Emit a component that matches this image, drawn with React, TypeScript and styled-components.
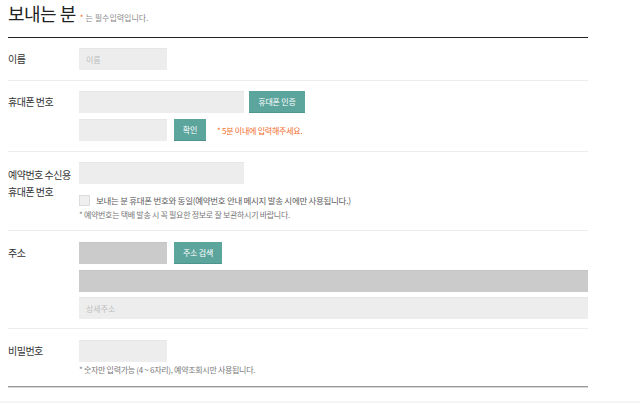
import React from "react";
import styled, { createGlobalStyle } from "styled-components";

const GlobalStyle = createGlobalStyle`
  body {
    margin: 0;
    background: #fff;
    font-family: "Noto Sans CJK KR", "Noto Sans", sans-serif;
    color: #333;
  }
`;

const Page = styled.div`
  width: 640px;
  height: 403px;
  overflow: hidden;
`;

const Section = styled.section`
  width: 580px;
  margin-left: 8px;
  border-bottom: 1px solid #999;
  box-shadow: 0 1px 0 #d6d6d6;
`;

const Header = styled.div`
  height: 38px;
  display: flex;
  align-items: baseline;
  border-bottom: 1px solid #222;
  box-sizing: border-box;
  padding-top: 0;
`;

const Title = styled.h2`
  margin: 0;
  font-size: 18px;
  line-height: 27px;
  font-weight: 400;
  letter-spacing: -0.5px;
  color: #222;
`;

const Required = styled.span`
  margin-left: 4px;
  font-size: 8px;
  letter-spacing: 0;
  color: #888;
`;

const Star = styled.span`
  color: #f26c2a;
  margin-right: 2px;
`;

const Row = styled.div<{ $pt?: number; $pb?: number; $last?: boolean }>`
  display: flex;
  padding: ${(p) => p.$pt ?? 10}px 0 ${(p) => p.$pb ?? 10}px;
  border-bottom: ${(p) => (p.$last ? "none" : "1px solid #ececec")};
`;

const Label = styled.div<{ $multi?: boolean }>`
  width: 71px;
  flex: none;
  font-size: 10px;
  letter-spacing: -0.5px;
  color: #333;
  line-height: ${(p) => (p.$multi ? "17px" : "22px")};
  padding-top: ${(p) => (p.$multi ? "4px" : "0")};
  white-space: pre-line;
`;

const Body = styled.div`
  flex: 1;
  display: flex;
  flex-direction: column;
`;

const Line = styled.div<{ $gap?: number; $top?: number }>`
  display: flex;
  align-items: center;
  gap: ${(p) => p.$gap ?? 7}px;
  margin-top: ${(p) => p.$top ?? 0}px;
`;

const Field = styled.input<{ $w?: number; $dark?: boolean }>`
  box-sizing: border-box;
  width: ${(p) => (p.$w ? `${p.$w}px` : "100%")};
  height: 22px;
  border: none;
  border-top: 1px solid ${(p) => (p.$dark ? "#c4c4c4" : "#e6e6e6")};
  background: ${(p) => (p.$dark ? "#cbcbcb" : "#ededed")};
  padding: 0 7px;
  font-family: inherit;
  font-size: 8px;
  letter-spacing: 0;
  color: #333;
  outline: none;
  &::placeholder {
    color: #bdbdbd;
  }
`;

const Button = styled.button<{ $w: number }>`
  box-sizing: border-box;
  width: ${(p) => p.$w}px;
  height: 22px;
  border: none;
  border-bottom: 1px solid #4d948d;
  background: #5ca59d;
  color: #fff;
  font-family: inherit;
  font-size: 8px;
  letter-spacing: -0.2px;
  padding: 0;
  cursor: pointer;
`;

const Warn = styled.span`
  margin-left: 4px;
  font-size: 8px;
  letter-spacing: -0.25px;
  color: #f26c2a;
`;

const Check = styled.label`
  display: flex;
  align-items: center;
  gap: 6px;
  margin-top: 10px;
  font-size: 8.5px;
  letter-spacing: -0.3px;
  color: #5a5a5a;
  line-height: 12px;
`;

const Box = styled.span`
  width: 11px;
  height: 11px;
  box-sizing: border-box;
  border: 1px solid #dcdcdc;
  background: #efefef;
  flex: none;
`;

const Note = styled.p<{ $top?: number }>`
  margin: ${(p) => p.$top ?? 3}px 0 0;
  font-size: 8px;
  line-height: 12px;
  letter-spacing: -0.3px;
  color: #777;
`;

const NextBand = styled.div`
  margin-top: 14px;
  height: 40px;
  background: #f4f4f4;
`;

export default function App() {
  return (
    <Page>
      <GlobalStyle />
      <Section>
        <Header>
          <Title>보내는 분</Title>
          <Required>
            <Star>*</Star>는 필수입력입니다.
          </Required>
        </Header>

        <Row>
          <Label>이름</Label>
          <Body>
            <Line>
              <Field $w={88} placeholder="이름" />
            </Line>
          </Body>
        </Row>

        <Row>
          <Label>휴대폰 번호</Label>
          <Body>
            <Line $gap={5}>
              <Field $w={165} />
              <Button $w={56}>휴대폰 인증</Button>
            </Line>
            <Line $top={6}>
              <Field $w={88} />
              <Button $w={32}>확인</Button>
              <Warn>* 5분 이내에 입력해주세요.</Warn>
            </Line>
          </Body>
        </Row>

        <Row $pb={9}>
          <Label $multi>{"예약번호 수신용\n휴대폰 번호"}</Label>
          <Body>
            <Line>
              <Field $w={165} />
            </Line>
            <Check>
              <Box />
              보내는 분 휴대폰 번호와 동일(예약번호 안내 메시지 발송 시에만 사용됩니다.)
            </Check>
            <Note>* 예약번호는 택배 발송 시 꼭 필요한 정보로 잘 보관하시기 바랍니다.</Note>
          </Body>
        </Row>

        <Row $pt={11} $pb={9}>
          <Label>주소</Label>
          <Body>
            <Line>
              <Field $w={88} $dark />
              <Button $w={48}>주소 검색</Button>
            </Line>
            <Line $top={6}>
              <Field $dark />
            </Line>
            <Line $top={5}>
              <Field placeholder="상세주소" />
            </Line>
          </Body>
        </Row>

        <Row $pt={11} $pb={10} $last>
          <Label>비밀번호</Label>
          <Body>
            <Line>
              <Field $w={88} />
            </Line>
            <Note $top={2}>* 숫자만 입력가능 (4 ~ 6자리), 예약조회시만 사용됩니다.</Note>
          </Body>
        </Row>
      </Section>
      <NextBand />
    </Page>
  );
}
